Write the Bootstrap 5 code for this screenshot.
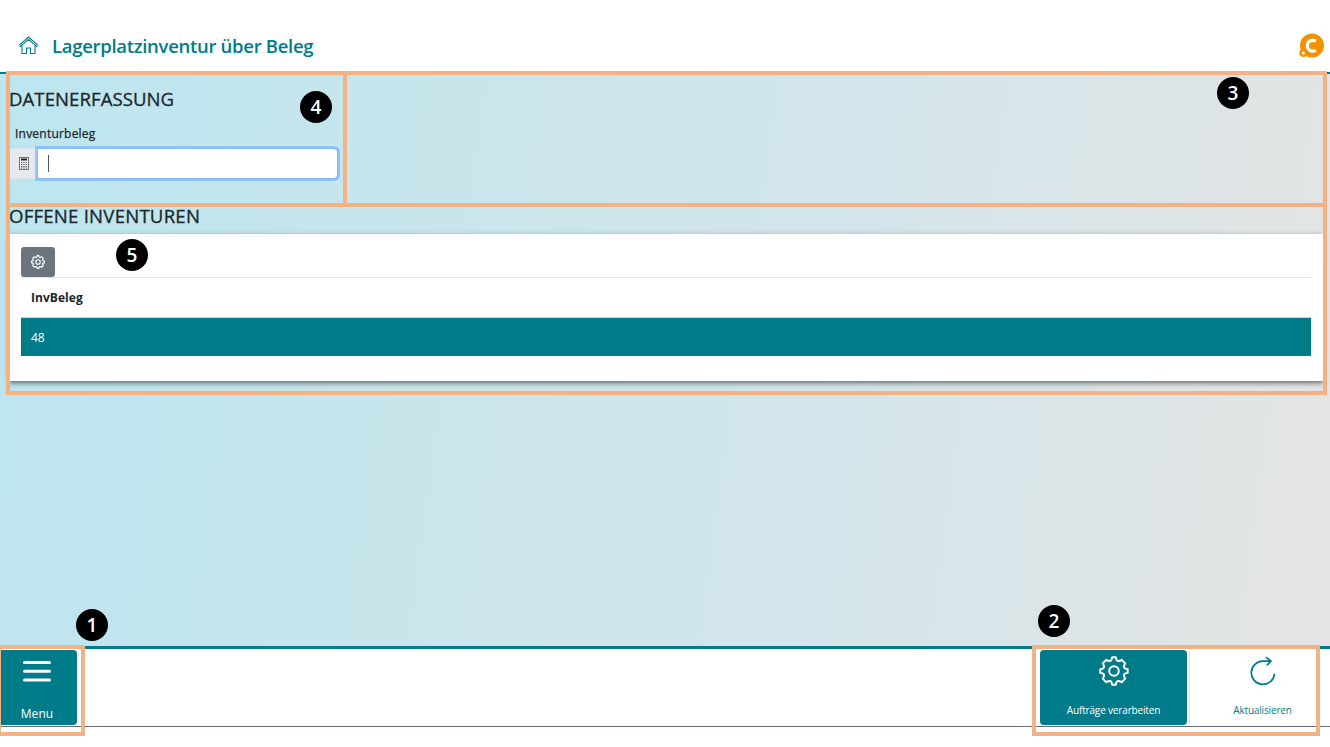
<!DOCTYPE html>
<html lang="de">
<head>
<meta charset="utf-8">
<meta name="viewport" content="width=device-width, initial-scale=1">
<title>Lagerplatzinventur über Beleg</title>
<link href="https://cdn.jsdelivr.net/npm/bootstrap@5.3.0/dist/css/bootstrap.min.css" rel="stylesheet">
<style>
:root { --teal: #007b8a; --frame: #f4b183; }
body { font-family: "Open Sans", "Noto Sans", sans-serif; height: 747px; overflow: hidden; background: #fff; color: #212529; }
.app-head { height: 74px; padding: 20px 5px 0 18px; border-bottom: 2px solid var(--teal); color: var(--teal); }
.app-title { font-size: 18.5px; font-weight: 600; letter-spacing: -.3px; margin-left: 13px; padding-top: 1px; }
.app-main { height: 572px; background: linear-gradient(98deg, #bce6f1 0%, #c5e5ed 22%, #d4e5ea 65%, #e4e4e4 99%); padding-left: 9px; padding-right: 7px; }
.entry { height: 131px; padding-top: 14px; }
.caption { font-size: 18.6px; line-height: 22px; margin: 0; font-weight: 400; -webkit-text-stroke: .3px currentColor; }
.cap-a { letter-spacing: .05px; }
.cap-b { letter-spacing: .22px; }
.entry label { font-size: 12px; line-height: 18px; margin: 15px 0 5px 6px; letter-spacing: .22px; -webkit-text-stroke: .25px currentColor; }
.entry .input-group { width: 329px; height: 31px; }
.entry .input-group-text { width: 29px; padding: 0 0 0 10px; background: #e6eaee; border: 1px solid #dce2e8; border-left: 0; border-radius: 0; }
.entry .form-control { min-height: 0; padding: 0 10px; border-color: #86b7fe; border-radius: 0 4px 4px 0; box-shadow: 0 0 0 2px rgba(97,170,250,.55); display: flex; align-items: center; }
.caret { width: 1px; height: 17px; background: #555; }
.panel { height: 147px; margin-top: 7px; background: #fff; padding: 13px 12px 0; box-shadow: 0 2px 5px rgba(0,0,0,.55); }
.tool-row { height: 31px; border-bottom: 1px solid #dee2e6; }
.tool-row .btn { width: 34px; height: 30px; border-radius: 3px; background: #6c757d; }
.inv-table { font-size: 12px; line-height: 18px; margin: 0; }
.inv-table th { height: 39px; padding: 9px 10px 10px; border-bottom: 1px solid #c4dde0; font-weight: 700; letter-spacing: .05px; }
.inv-table td { height: 38px; padding: 11px 10px 9px; background: var(--teal); color: #fff; border: 0; }
.app-foot { height: 81px; border-top: 3px solid var(--teal); }
.foot-bar { height: 78px; border-bottom: 1px solid #6a6870; padding: 1px 0 0; }
.tile { height: 75px; border-radius: 4px; padding: 0; border: 0; color: #fff; background: var(--teal); display: flex; flex-direction: column; align-items: center; justify-content: space-between; }
.tile span { font-size: 10px; line-height: 14px; margin-bottom: 8px; white-space: nowrap; letter-spacing: -.16px; }
.tile-menu { width: 77px; border-radius: 0 4px 4px 0; padding-right: 3px; }
.tile-menu span { font-size: 12px; letter-spacing: .1px; margin-bottom: 4px; }
.tile-menu svg { margin-top: 9px; }
.tile-main { width: 147px; }
.tile-plain { width: 145px; background: #fff; color: var(--teal); }
.tile-icon { margin: 6px 0 0; }
.foot-actions { margin-right: -5px; }
.foot-split { height: 72px; margin: 2px 0 0 2px; }
.mark-frame { position: absolute; border: 4px solid var(--frame); pointer-events: none; }
.mark-dot { position: absolute; width: 32px; height: 32px; border-radius: 50%; background: #000; color: #fff; font-size: 19px; font-weight: 600; line-height: 32px; text-align: center; }
</style>
</head>
<body class="position-relative">
<header class="app-head d-flex align-items-center">
  <svg width="21" height="20" viewBox="0 0 21 20" fill="none" stroke="currentColor" stroke-width="1.1" stroke-linejoin="round"><path d="M1 9.3 10.5 1 20 9.3M1.8 10.9 10.5 3.4 19.2 10.9M4 9.5V17.5H8.5V12H12.5V17.5H17V9.5"/></svg>
  <h1 class="app-title mb-0">Lagerplatzinventur über Beleg</h1>
  <svg class="ms-auto" width="26" height="26" viewBox="0 0 26 26"><circle cx="13" cy="12.5" r="12" fill="#f39200"/><circle cx="4.3" cy="20" r="4" fill="#f39200"/><circle cx="4.3" cy="20" r="1.5" fill="#fff"/><path d="M17 8C11.8 6 8.4 8.5 8.4 12.6C8.4 17.1 12 19.2 17 17.4" fill="none" stroke="#fff" stroke-width="3.2"/></svg>
</header>
<main class="app-main">
  <section class="entry">
    <h2 class="caption cap-a">DATENERFASSUNG</h2>
    <label class="d-block">Inventurbeleg</label>
    <div class="input-group flex-nowrap">
      <span class="input-group-text"><svg width="10" height="13" viewBox="0 0 10 13"><rect x=".5" y=".5" width="9" height="12" fill="#f1f1f3" stroke="#77727e"/><path d="M2 2.5H8" stroke="#222" stroke-width="2"/><path d="M2 5.5H8M2 7.5H8M2 9.5H8M2 11H8" stroke="#555" stroke-dasharray="1.3 1"/></svg></span>
      <div class="form-control"><span class="caret"></span></div>
    </div>
  </section>
  <section>
    <h2 class="caption cap-b">OFFENE INVENTUREN</h2>
    <div class="panel">
      <div class="tool-row"><button class="btn btn-secondary border-0 p-0 d-flex align-items-center justify-content-center" aria-label="Einstellungen"><svg width="14" height="14" viewBox="0 0 30 30" fill="none" stroke="currentColor" stroke-width="2.5"><use href="#gear"/></svg></button></div>
      <table class="table inv-table"><thead><tr><th>InvBeleg</th></tr></thead><tbody><tr><td>48</td></tr></tbody></table>
    </div>
  </section>
</main>
<footer class="app-foot">
  <div class="foot-bar d-flex">
    <button class="tile tile-menu"><svg width="30" height="24" viewBox="0 0 30 24" stroke="#fff" stroke-width="3" stroke-linecap="round"><path d="M2.5 3.5H27.5M2.5 12.3H27.5M2.5 21H27.5"/></svg><span>Menu</span></button>
    <div class="foot-actions d-flex ms-auto">
      <button class="tile tile-main"><svg class="tile-icon" width="30" height="30" viewBox="0 0 30 30" fill="none" stroke="currentColor" stroke-width="2"><g id="gear"><path stroke-linejoin="round" d="M12.6 3.6 13.2 1.3H16.8L17.4 3.6Q18.2 5.6 20.6 4.8L22.6 3.8 26.2 7.4 25.2 9.4Q24.4 11.8 26.4 12.6L28.7 13.2V16.8L26.4 17.4Q24.4 18.2 25.2 20.6L26.2 22.6 22.6 26.2 20.6 25.2Q18.2 24.4 17.4 26.4L16.8 28.7H13.2L12.6 26.4Q11.8 24.4 9.4 25.2L7.4 26.2 3.8 22.6 4.8 20.6Q5.6 18.2 3.6 17.4L1.3 16.8V13.2L3.6 12.6Q5.6 11.8 4.8 9.4L3.8 7.4 7.4 3.8 9.4 4.8Q11.8 5.6 12.6 3.6Z"/><circle cx="15" cy="15" r="4.8"/></g></svg><span>Aufträge verarbeiten</span></button>
      <div class="foot-split border-start"></div>
      <button class="tile tile-plain"><svg class="tile-icon" width="30" height="30" viewBox="0 0 30 30" fill="none" stroke="currentColor" stroke-width="1.7" stroke-linecap="round" stroke-linejoin="round"><path d="M22.6 5.2H15A11.6 11.6 0 1 0 26.4 18.3M18.6 1.6 23 5.2 19.3 8.8"/></svg><span>Aktualisieren</span></button>
    </div>
  </div>
</footer>
<div class="mark-frame" style="left:6px;top:71px;width:1321px;height:136px"></div>
<div class="mark-frame" style="left:6px;top:71px;width:341px;height:136px"></div>
<div class="mark-frame" style="left:6px;top:203px;width:1321px;height:192px"></div>
<div class="mark-frame" style="left:-3px;top:645px;width:88px;height:91px"></div>
<div class="mark-frame" style="left:1032px;top:645px;width:288px;height:91px"></div>
<div class="mark-dot" style="left:76px;top:609px">1</div>
<div class="mark-dot" style="left:1038px;top:605px">2</div>
<div class="mark-dot" style="left:1217px;top:77px">3</div>
<div class="mark-dot" style="left:300px;top:91px">4</div>
<div class="mark-dot" style="left:116px;top:239px">5</div>
<script src="https://cdn.jsdelivr.net/npm/bootstrap@5.3.0/dist/js/bootstrap.bundle.min.js"></script>
</body>
</html>
